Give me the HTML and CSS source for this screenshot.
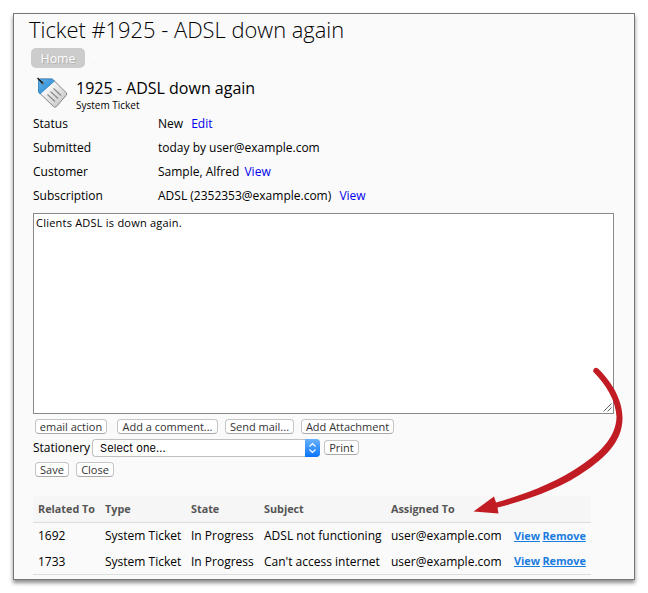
FILE: index.html
```html
<!DOCTYPE html>
<html lang="en">
<head>
<meta charset="utf-8">
<title>Ticket #1925 - ADSL down again</title>
<link rel="stylesheet" href="styles.css">
</head>
<body>
<main class="panel">
  <h1 class="title">Ticket #1925 - ADSL down again</h1>
  <nav class="crumbs"><a class="home">Home</a><span class="sep">&gt;</span></nav>
  <header class="ticket">
    <svg class="tag" width="34" height="34" viewBox="0 0 34 34">
      <defs>
        <linearGradient id="paper" x1="0" y1="0" x2="1" y2="1"><stop offset="0.3" stop-color="#f8f8f8"/><stop offset="1" stop-color="#bcbcbc"/></linearGradient>
        <linearGradient id="blue" x1="0" y1="0" x2="1" y2="1"><stop offset="0" stop-color="#62b5ee"/><stop offset="1" stop-color="#2180cc"/></linearGradient>
      </defs>
      <path d="M1.500 5Q1.500 3 3.500 3H14.500Q15.500 3 16.500 4L29 16.500Q30.500 18 29 19.500L19.500 30.500Q18 32 16.500 30.500L2.500 17Q1.500 16 1.500 15Z" fill="url(#paper)" stroke="#858585"/>
      <path d="M1.500 5Q1.500 3 3.500 3H14.500Q15.500 3 17.500 5L3 18L1.500 16Z" fill="url(#blue)" stroke="#2b83bf" stroke-width=".7"/>
      <path d="M10.500 18.500l7.500 7M13.500 15.500l7.500 7M16.500 12.500l7.500 7" stroke="#8b8b8b" stroke-width="1.300" fill="none"/>
      <circle cx="5.500" cy="7" r="1.500" fill="#d8efff" stroke="#315b78" stroke-width=".7"/>
      <path d="M.5 2L6 7.500" stroke="#111" stroke-width="1.500"/>
    </svg>
    <div>
      <h2 class="name">1925 - ADSL down again</h2>
      <p class="kind">System Ticket</p>
    </div>
  </header>
  <dl class="facts">
    <dt>Status</dt><dd>New <a>Edit</a></dd>
    <dt>Submitted</dt><dd>today by user@example.com</dd>
    <dt>Customer</dt><dd class="near">Sample, Alfred <a>View</a></dd>
    <dt>Subscription</dt><dd>ADSL (2352353@example.com) <a>View</a></dd>
  </dl>
  <div class="note"><span>Clients ADSL is down again.</span>
    <svg class="grip" width="9" height="9" viewBox="0 0 9 9"><path d="M.5 8.500l8-8M4.500 8.500l4-4" stroke="#666" fill="none"/></svg>
  </div>
  <div class="actions">
    <button class="email">email action</button><button class="comment">Add a comment...</button><button class="mail">Send mail...</button><button class="attach">Add Attachment</button>
  </div>
  <div class="stationery">
    <span class="label">Stationery</span>
    <div class="select"><span>Select one...</span><i class="stepper"><svg width="15" height="18" viewBox="0 0 15 18"><path d="M4.500 7.500l3-3 3 3M4.500 10.500l3 3 3-3" fill="none" stroke="#fff" stroke-width="1.200"/></svg></i></div>
    <button class="print">Print</button>
  </div>
  <div class="actions save-row"><button class="save">Save</button><button class="close">Close</button></div>
  <table class="related">
    <colgroup><col class="c1"><col class="c2"><col class="c3"><col class="c4"><col class="c5"><col class="c6"></colgroup>
    <thead><tr><th>Related To</th><th>Type</th><th>State</th><th>Subject</th><th>Assigned To</th><th></th></tr></thead>
    <tbody>
      <tr><td>1692</td><td>System Ticket</td><td>In Progress</td><td>ADSL not functioning</td><td>user@example.com</td><td class="links"><a>View</a> <a>Remove</a></td></tr>
      <tr><td>1733</td><td>System Ticket</td><td>In Progress</td><td>Can't access internet</td><td>user@example.com</td><td class="links"><a>View</a> <a>Remove</a></td></tr>
    </tbody>
  </table>
  <svg class="arrow" width="170" height="160" viewBox="460 360 170 160">
    <path d="M593 371.500Q594 366 598 368.500C609 379 623 398 622.500 419C622 440 608 455 589 468.500C562 488 531 499 497.500 507.500L498.500 513.500L473.500 511.500L494 496.500L496 502.500C529 493 557 482 583 464C602 451 616 436 616.500 417C616 401 606 384 593 371.500Z" fill="#c11c24"/>
  </svg>
</main>
</body>
</html>
```
FILE: styles.css
```css
* { box-sizing: border-box; }
body { margin: 0; background: #fff; color: #000; font: 12px/18px "Open Sans", sans-serif; }
h1, h2, p, dl, dd { margin: 0; font-weight: 400; }
.panel { position: relative; width: 622px; height: 567px; margin: 13px; padding: 0 19px; border: 1px solid #777; background: #fafafa; box-shadow: 0 3px 4px rgba(0,0,0,.45); }
.title { height: 34px; margin-left: -4px; font-size: 21.900px; line-height: 31px; font-weight: 300; white-space: nowrap; }
.crumbs { display: flex; height: 20px; margin-left: -2px; }
.home { width: 54px; border-radius: 5px; background: #ccc; color: #fff; font-size: 12.300px; line-height: 21px; text-align: center; text-shadow: 1px 1px 1px #aaa; }
.sep { margin-left: 5px; color: #fff; line-height: 20px; }
.ticket { display: flex; height: 43px; padding-top: 8px; }
.tag { flex: none; margin: 0 5px 0 4px; }
.name { font-size: 16px; line-height: 24px; white-space: nowrap; }
.kind { font-size: 10px; line-height: 10px; }
.facts { display: grid; grid-template-columns: 125px 1fr; grid-auto-rows: 24px; height: 102px; line-height: 25px; white-space: nowrap; }
.facts dt { margin: 0; }
.facts a { margin-left: 5px; color: #00e; }
.facts .near a { margin-left: 2px; }
.note { position: relative; width: 581px; height: 201px; border: 1px solid #8a8a8a; background: #fff; padding: 0 2px; font-size: 11px; letter-spacing: .22px; }
.grip { position: absolute; right: 1px; bottom: 1px; }
.actions { display: flex; padding: 5px 0 0 2px; height: 23px; }
button { flex: none; height: 15px; padding: 0; border: 1px solid #c5c5c5; border-bottom-color: #aaa; border-radius: 4px; background: #fff; color: #333; font: 11px/13px "Open Sans", sans-serif; white-space: nowrap; }
.email { width: 72px; margin-right: 10px; }
.comment { width: 101px; margin-right: 7px; }
.mail { width: 69px; margin-right: 7px; }
.attach { width: 93px; }
.stationery { display: flex; align-items: center; height: 22px; }
.label { width: 59px; white-space: nowrap; }
.select { display: flex; justify-content: space-between; width: 228px; height: 18px; border: 1px solid #c0c0c0; border-right: 0; border-radius: 4px; background: #fff; padding-left: 7px; font: 11px/16px Inter, sans-serif; letter-spacing: .1px; }
.stepper { width: 15px; height: 18px; margin-top: -1px; border-radius: 0 4px 4px 0; background: linear-gradient(#6ab2fb, #0875ff); }
.stepper svg { display: block; }
.print { width: 35px; margin: -1px 0 0 4px; }
.save-row { padding-top: 3px; height: 37px; }
.save { width: 34px; margin-right: 7px; }
.close { width: 38px; }
.related { width: 558px; table-layout: fixed; border-collapse: collapse; white-space: nowrap; }
.c1 { width: 67px; } .c2 { width: 86px; } .c3 { width: 73px; } .c4 { width: 127px; } .c5 { width: 123px; } .c6 { width: 82px; }
th, td { padding: 0 5px; height: 26px; text-align: left; }
td { padding-top: 2px; }
th { height: 26px; background: #f6f6f6; border-bottom: 1px solid #ddd; color: #555; font-size: 10.800px; }
tbody { border-bottom: 1px solid #ddd; }
.links { padding-top: 1px; font-size: 10.850px; font-weight: 700; word-spacing: -.5px; }
.links a { color: #1b7ce0; text-decoration: underline; }
.arrow { position: absolute; left: 446px; top: 346px; }
```
